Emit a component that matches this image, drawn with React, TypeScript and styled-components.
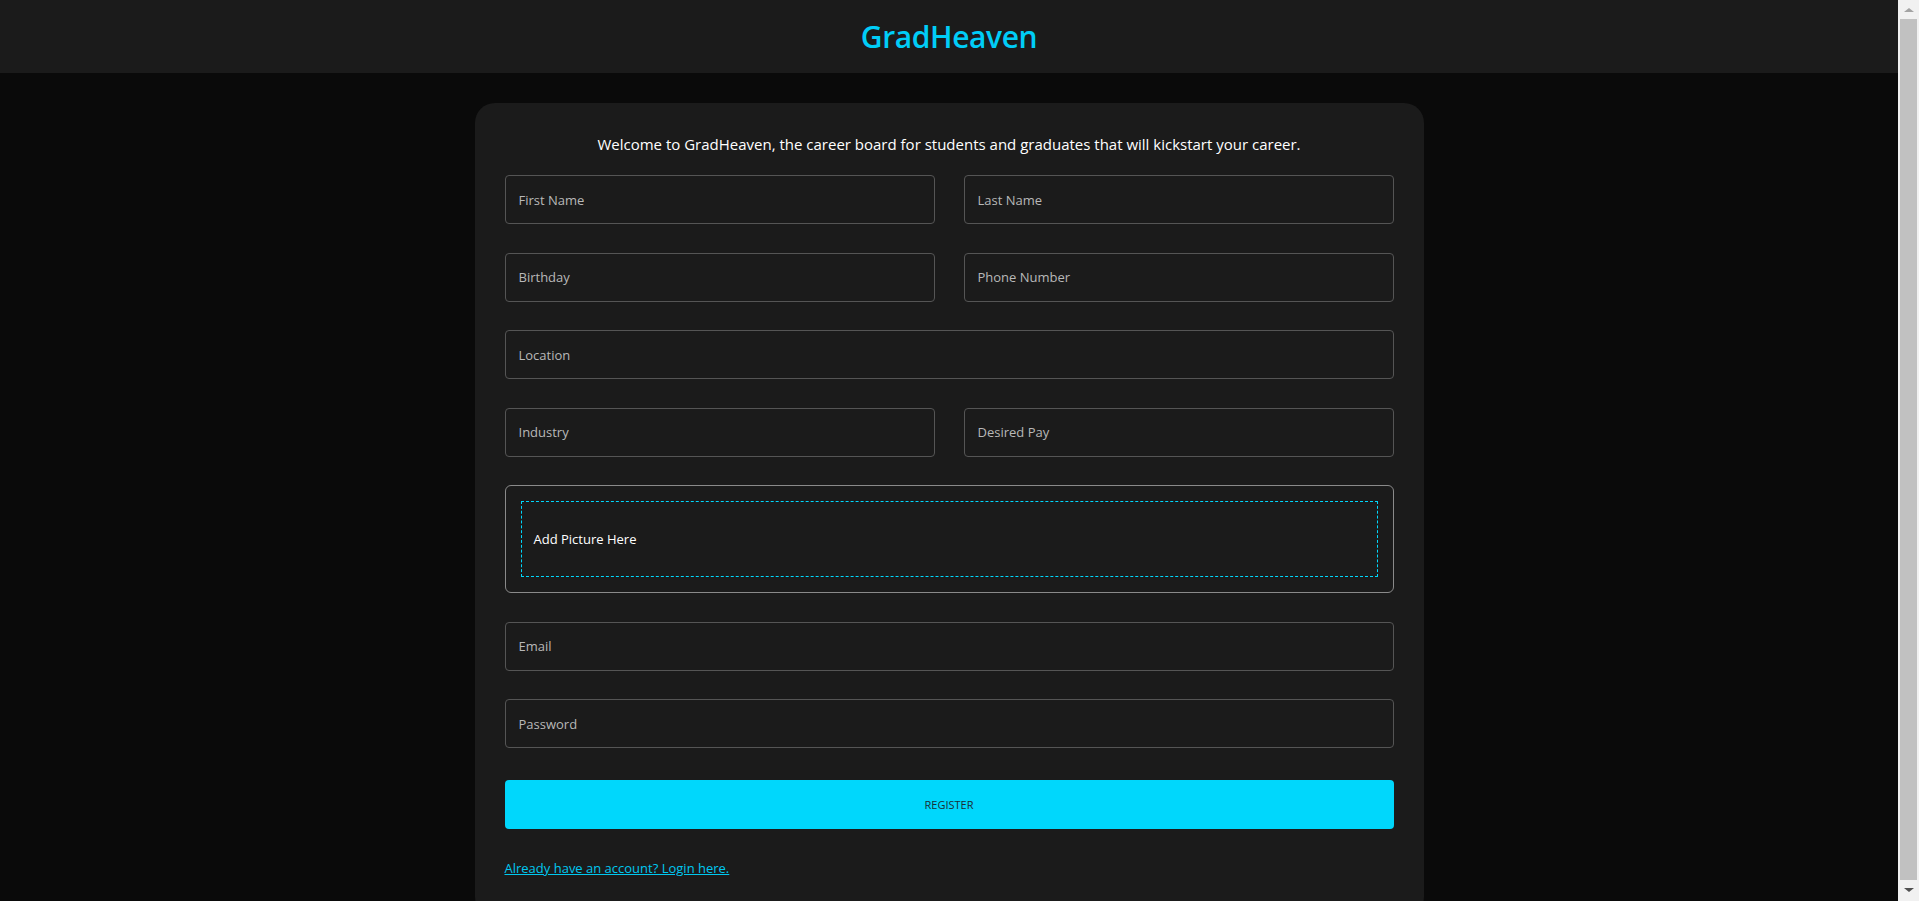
import React from "react";
import styled, { createGlobalStyle } from "styled-components";

const Global = createGlobalStyle`
  html, body {
    margin: 0;
    padding: 0;
    background: #0a0a0a;
    font-family: "Open Sans", "Noto Sans", sans-serif;
  }
  body {
    padding-right: 21px;
  }
  * { box-sizing: border-box; }
`;

const Scrollbar = styled.div`
  position: fixed;
  top: 0;
  right: 0;
  bottom: 0;
  width: 21px;
  background: #f1f1f1;
  display: flex;
  flex-direction: column;
  align-items: center;
  padding-bottom: 2px;
`;

const Arrow = styled.div<{ $down?: boolean }>`
  height: 19px;
  width: 21px;
  display: flex;
  align-items: center;
  justify-content: center;
  &::after {
    content: "";
    border-left: 5px solid transparent;
    border-right: 5px solid transparent;
    ${(p) =>
      p.$down
        ? "border-top: 4px solid #505050;"
        : "border-bottom: 4px solid #a3a3a3;"}
  }
`;

const Thumb = styled.div`
  flex: 1;
  width: 17px;
  background: #c1c1c1;
`;

const Header = styled.header`
  height: 73px;
  background: #1b1b1b;
  display: flex;
  align-items: center;
  justify-content: center;
`;

const Logo = styled.h1`
  margin: 0;
  color: #00cdf7;
  font-size: 30px;
  font-weight: 600;
  letter-spacing: -0.4px;
`;

const Card = styled.main`
  width: 949px;
  margin: 30px auto 0;
  background: #1b1b1b;
  border-radius: 20px;
  padding: 30px 30px 40px;
`;

const Welcome = styled.p`
  margin: 0 0 20px;
  text-align: center;
  color: #ffffff;
  font-size: 15px;
  line-height: 22px;
`;

const Form = styled.form`
  display: grid;
  grid-template-columns: 1fr 1fr;
  column-gap: 29px;
  row-gap: 28.5px;
`;

const Input = styled.input<{ $full?: boolean }>`
  grid-column: ${(p) => (p.$full ? "1 / -1" : "auto")};
  height: 49px;
  width: 100%;
  background: #1b1b1b;
  border: 1px solid #555;
  border-radius: 4px;
  padding: 0 13px;
  color: #ddd;
  font-family: inherit;
  font-size: 13px;
  outline: none;
  &::placeholder { color: #b8b8b8; }
`;

const PictureBox = styled.div`
  grid-column: 1 / -1;
  height: 108px;
  border: 1px solid #8a8a8a;
  border-radius: 6px;
  padding: 15px;
  display: flex;
`;

const DropZone = styled.label`
  flex: 1;
  border: 1px dashed #00d7fc;
  display: flex;
  align-items: center;
  padding: 0 12px;
  color: #ffffff;
  font-size: 13px;
  cursor: pointer;
`;

const Button = styled.button`
  grid-column: 1 / -1;
  margin-top: 3px;
  height: 49px;
  background: #00d7fc;
  border: none;
  border-radius: 4px;
  color: #1b2f35;
  font-family: inherit;
  font-size: 11px;
  text-transform: uppercase;
  cursor: pointer;
`;

const LinkRow = styled.div`
  grid-column: 1 / -1;
  margin-top: 1px;
  line-height: 18px;
`;

const Link = styled.a`
  color: #00c8f0;
  font-size: 13px;
  line-height: 18px;
  text-decoration: underline;
`;

export default function App() {
  return (
    <>
      <Global />
      <Header>
        <Logo>GradHeaven</Logo>
      </Header>
      <Card>
        <Welcome>
          Welcome to GradHeaven, the career board for students and graduates that will kickstart your career.
        </Welcome>
        <Form onSubmit={(e) => e.preventDefault()}>
          <Input placeholder="First Name" />
          <Input placeholder="Last Name" />
          <Input placeholder="Birthday" />
          <Input placeholder="Phone Number" />
          <Input $full placeholder="Location" />
          <Input placeholder="Industry" />
          <Input placeholder="Desired Pay" />
          <PictureBox>
            <DropZone>Add Picture Here</DropZone>
          </PictureBox>
          <Input $full placeholder="Email" />
          <Input $full type="password" placeholder="Password" />
          <Button type="submit">Register</Button>
          <LinkRow>
            <Link href="#">Already have an account? Login here.</Link>
          </LinkRow>
        </Form>
      </Card>
      <Scrollbar aria-hidden="true">
        <Arrow />
        <Thumb />
        <Arrow $down />
      </Scrollbar>
    </>
  );
}
